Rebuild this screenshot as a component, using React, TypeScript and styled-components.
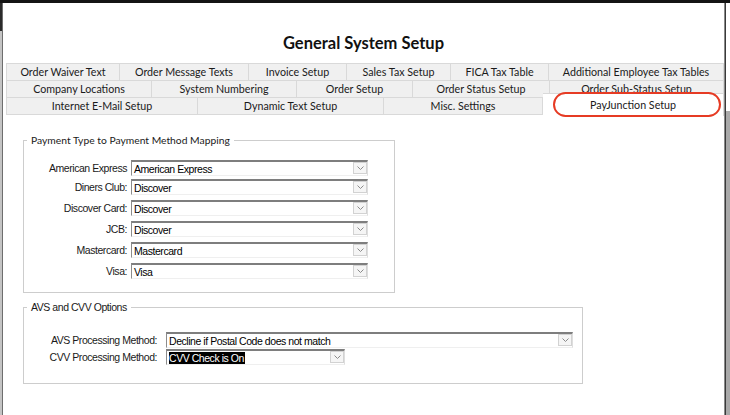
import styled, { createGlobalStyle } from "styled-components";

const GlobalStyle = createGlobalStyle`
  html, body {
    margin: 0;
    padding: 0;
    width: 730px;
    height: 415px;
    overflow: hidden;
    background: #151515;
  }
`;

interface TabItem {
  label: string;
  w: number;
  selected?: boolean;
}

const tabRows: TabItem[][] = [
  [
    { label: "Order Waiver Text", w: 114 },
    { label: "Order Message Texts", w: 129 },
    { label: "Invoice Setup", w: 98 },
    { label: "Sales Tax Setup", w: 104 },
    { label: "FICA Tax Table", w: 98 },
    { label: "Additional Employee Tax Tables", w: 175 },
  ],
  [
    { label: "Company Locations", w: 146 },
    { label: "System Numbering", w: 145 },
    { label: "Order Setup", w: 116 },
    { label: "Order Status Setup", w: 137 },
    { label: "Order Sub-Status Setup", w: 174 },
  ],
  [
    { label: "Internet E-Mail Setup", w: 192 },
    { label: "Dynamic Text Setup", w: 186 },
    { label: "Misc. Settings", w: 159 },
    { label: "PayJunction Setup", w: 181, selected: true },
  ],
];

const paymentRows = [
  { label: "American Express", value: "American Express", gap: 0 },
  { label: "Diners Club:", value: "Discover", gap: 3 },
  { label: "Discover Card:", value: "Discover", gap: 5 },
  { label: "JCB:", value: "Discover", gap: 5 },
  { label: "Mastercard:", value: "Mastercard", gap: 5 },
  { label: "Visa:", value: "Visa", gap: 5 },
];

const Screen = styled.div`
  width: 730px;
  height: 415px;
  display: flex;
  flex-direction: column;
  background: #151515;
`;

const TopEdge = styled.div`
  height: 3px;
  background: #141414;
`;

const Frame = styled.div`
  flex: 1;
  display: flex;
  min-height: 0;
`;

const LeftEdge = styled.div`
  width: 2px;
  background: linear-gradient(to bottom, #2a2a2a 0 28px, #c4c4c4 28px);
`;

const RightEdge = styled.div`
  width: 5px;
  background: linear-gradient(to bottom, #ffffff 0 108px, #a9a9a9 108px);
  border-left: 1px solid #3a3a3a;
  box-sizing: border-box;
`;

const Dialog = styled.div`
  flex: 1;
  display: flex;
  flex-direction: column;
  background: #ffffff;
  border-left: 1px solid #6e6e6e;
  border-right: 1px solid #8a8a8a;
`;

const Title = styled.h1`
  margin: 30px 0 10px;
  height: 20px;
  line-height: 20px;
  text-align: center;
  font-family: Lato, "Open Sans", sans-serif;
  font-weight: 700;
  font-size: 16.5px;
  color: #111;
`;

const Tabs = styled.div`
  margin-left: 3px;
  width: 718px;
  display: flex;
  flex-direction: column;
`;

const TabRow = styled.div<{ $first?: boolean }>`
  display: flex;
  height: 17px;
  border-top: ${(p) => (p.$first ? "1px solid #d9d9d9" : "none")};
`;

const Tab = styled.div<{ $w: number; $selected?: boolean }>`
  position: relative;
  width: ${(p) => p.$w}px;
  box-sizing: border-box;
  height: ${(p) => (p.$selected ? "23px" : "17px")};
  margin-top: ${(p) => (p.$selected ? "-5px" : "0")};
  z-index: ${(p) => (p.$selected ? 2 : 1)};
  background: ${(p) => (p.$selected ? "#ffffff" : "#f0f0f0")};
  border-right: 1px solid #d9d9d9;
  border-bottom: ${(p) => (p.$selected ? "none" : "1px solid #d9d9d9")};
  border-top: ${(p) => (p.$selected ? "1px solid #d9d9d9" : "none")};
  font-family: Lato, "Open Sans", sans-serif;
  font-size: 10.7px;
  line-height: ${(p) => (p.$selected ? "21px" : "16px")};
  color: #1a1a1a;
  text-align: center;
  white-space: nowrap;
  overflow: hidden;

  &:first-child {
    border-left: 1px solid #d9d9d9;
  }
`;

const Highlight = styled.span`
  position: absolute;
  left: 10px;
  right: 2px;
  top: -2px;
  bottom: -1px;
  border: 2.5px solid #e63b24;
  border-radius: 13px;
  pointer-events: none;
`;

const SelectedTab = styled(Tab)`
  overflow: visible;
`;

const Content = styled.div`
  padding-left: 20px;
  display: flex;
  flex-direction: column;
`;

const Group = styled.fieldset<{ $w: number; $top: number }>`
  margin: ${(p) => p.$top}px 0 0;
  padding: 0;
  width: ${(p) => p.$w}px;
  box-sizing: border-box;
  min-width: 0;
  border: 1px solid #cdcdcd;
`;

const Legend = styled.legend<{ $narrow?: boolean }>`
  margin-left: 3px;
  padding: 0 4px;
  height: 14px;
  line-height: 14px;
  font-family: ${(p) =>
    p.$narrow ? '"Liberation Sans", Arial, sans-serif' : 'Lato, "Open Sans", sans-serif'};
  font-size: ${(p) => (p.$narrow ? "10.5px" : "10.3px")};
  letter-spacing: ${(p) => (p.$narrow ? "-0.45px" : "0")};
  color: #1a1a1a;
`;

const Rows = styled.div<{ $pt: number; $pb: number }>`
  display: flex;
  flex-direction: column;
  padding: ${(p) => p.$pt}px 0 ${(p) => p.$pb}px;
`;

const Row = styled.div<{ $gap: number }>`
  display: flex;
  align-items: center;
  height: 16px;
  margin-top: ${(p) => p.$gap}px;
`;

const Label = styled.div<{ $w: number; $space: number }>`
  width: ${(p) => p.$w}px;
  margin-right: ${(p) => p.$space}px;
  text-align: right;
  white-space: nowrap;
  font-family: "Liberation Sans", Arial, sans-serif;
  font-size: 10.5px;
  letter-spacing: -0.45px;
  color: #1a1a1a;
`;

const Select = styled.div<{ $w: number }>`
  width: ${(p) => p.$w}px;
  height: 16px;
  box-sizing: border-box;
  display: flex;
  align-items: flex-end;
  background: #fff;
  border-top: 2px solid #7e7e7e;
  border-left: 1px solid #8c8c8c;
  border-right: 1px solid #dedede;
  border-bottom: 1px solid #efefef;
`;

const SelectText = styled.div`
  flex: 1;
  align-self: center;
  padding-left: 2px;
  white-space: nowrap;
  font-family: "Liberation Sans", Arial, sans-serif;
  font-size: 10.5px;
  letter-spacing: -0.45px;
  color: #000;
`;

const Marked = styled.span`
  background: #000;
  color: #fff;
  padding: 0 1px 0 0;
`;

const Chevron = styled.div`
  width: 14px;
  height: 12px;
  box-sizing: border-box;
  margin: 0 0 1px;
  display: grid;
  place-items: center;
  background: #f5f5f5;
  border: 1px solid #d2d2d2;
`;

function Dropdown({ w, children }: { w: number; children: React.ReactNode }) {
  return (
    <Select $w={w}>
      <SelectText>{children}</SelectText>
      <Chevron>
        <svg width="7" height="4" viewBox="0 0 7 4">
          <polyline points="0.5,0.5 3.5,3.5 6.5,0.5" fill="none" stroke="#8a8a8a" strokeWidth="1" />
        </svg>
      </Chevron>
    </Select>
  );
}

function App() {
  return (
    <Screen>
      <GlobalStyle />
      <TopEdge />
      <Frame>
        <LeftEdge />
        <Dialog>
          <Title>General System Setup</Title>
          <Tabs>
            {tabRows.map((row, i) => (
              <TabRow key={i} $first={i === 0}>
                {row.map((t) =>
                  t.selected ? (
                    <SelectedTab key={t.label} $w={t.w} $selected>
                      {t.label}
                      <Highlight />
                    </SelectedTab>
                  ) : (
                    <Tab key={t.label} $w={t.w}>
                      {t.label}
                    </Tab>
                  ),
                )}
              </TabRow>
            ))}
          </Tabs>
          <Content>
            <Group $w={372} $top={18}>
              <Legend>Payment Type to Payment Method Mapping</Legend>
              <Rows $pt={13} $pb={13}>
                {paymentRows.map((r) => (
                  <Row key={r.label} $gap={r.gap}>
                    <Label $w={103} $space={4}>
                      {r.label}
                    </Label>
                    <Dropdown w={237}>{r.value}</Dropdown>
                  </Row>
                ))}
              </Rows>
            </Group>
            <Group $w={560} $top={7}>
              <Legend $narrow>AVS and CVV Options</Legend>
              <Rows $pt={18} $pb={18}>
                <Row $gap={0}>
                  <Label $w={133} $space={9}>
                    AVS Processing Method:
                  </Label>
                  <Dropdown w={407}>Decline if Postal Code does not match</Dropdown>
                </Row>
                <Row $gap={1}>
                  <Label $w={133} $space={9}>
                    CVV Processing Method:
                  </Label>
                  <Dropdown w={179}>
                    <Marked>CVV Check is On</Marked>
                  </Dropdown>
                </Row>
              </Rows>
            </Group>
          </Content>
        </Dialog>
        <RightEdge />
      </Frame>
    </Screen>
  );
}

export default App;
